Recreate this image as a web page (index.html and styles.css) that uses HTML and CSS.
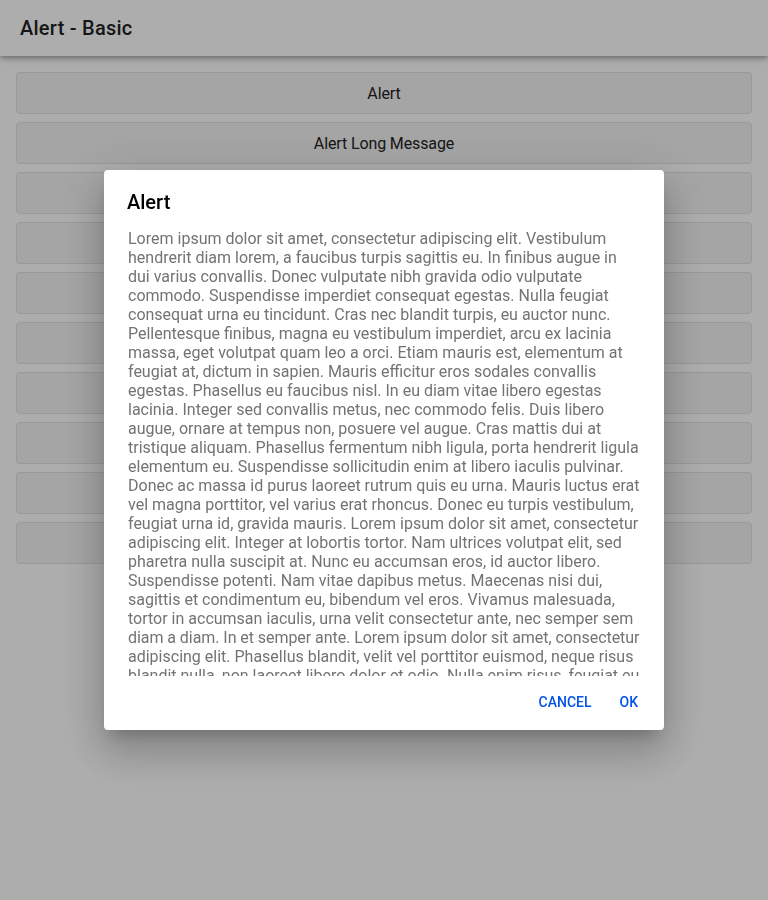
FILE: index.html
```html
<!DOCTYPE html>
<html lang="en">
<head>
<meta charset="utf-8">
<title>Alert - Basic</title>
<link rel="stylesheet" href="styles.css">
</head>
<body>
<div class="app">
  <header class="toolbar">
    <div class="toolbar-title">Alert - Basic</div>
  </header>
  <main class="content">
    <button class="demo-btn">Alert</button>
    <button class="demo-btn">Alert Long Message</button>
    <button class="demo-btn">Multiple Buttons (&gt;2)</button>
    <button class="demo-btn">Alert No Message</button>
    <button class="demo-btn">Confirm</button>
    <button class="demo-btn">Prompt</button>
    <button class="demo-btn">Radio</button>
    <button class="demo-btn">Checkbox</button>
    <button class="demo-btn">CSS Class</button>
    <button class="demo-btn">Alert with Translucent</button>
  </main>
</div>
<div class="backdrop"></div>
<div class="alert-host">
  <div class="alert-wrapper" role="alertdialog">
    <div class="alert-head">
      <h2 class="alert-title">Alert</h2>
    </div>
    <div class="alert-message">Lorem ipsum dolor sit amet, consectetur adipiscing elit. Vestibulum hendrerit diam lorem, a faucibus turpis sagittis eu. In finibus augue in dui varius convallis. Donec vulputate nibh gravida odio vulputate commodo. Suspendisse imperdiet consequat egestas. Nulla feugiat consequat urna eu tincidunt. Cras nec blandit turpis, eu auctor nunc. Pellentesque finibus, magna eu vestibulum imperdiet, arcu ex lacinia massa, eget volutpat quam leo a orci. Etiam mauris est, elementum at feugiat at, dictum in sapien. Mauris efficitur eros sodales convallis egestas. Phasellus eu faucibus nisl. In eu diam vitae libero egestas lacinia. Integer sed convallis metus, nec commodo felis. Duis libero augue, ornare at tempus non, posuere vel augue. Cras mattis dui at tristique aliquam. Phasellus fermentum nibh ligula, porta hendrerit ligula elementum eu. Suspendisse sollicitudin enim at libero iaculis pulvinar. Donec ac massa id purus laoreet rutrum quis eu urna. Mauris luctus erat vel magna porttitor, vel varius erat rhoncus. Donec eu turpis vestibulum, feugiat urna id, gravida mauris. Lorem ipsum dolor sit amet, consectetur adipiscing elit. Integer at lobortis tortor. Nam ultrices volutpat elit, sed pharetra nulla suscipit at. Nunc eu accumsan eros, id auctor libero. Suspendisse potenti. Nam vitae dapibus metus. Maecenas nisi dui, sagittis et condimentum eu, bibendum vel eros. Vivamus malesuada, tortor in accumsan iaculis, urna velit consectetur ante, nec semper sem <span class="fit">diam a diam. In et semper ante. Lorem ipsum dolor sit amet, consectetur</span> adipiscing elit. Phasellus blandit, velit vel porttitor euismod, neque risus blandit nulla, non laoreet libero dolor et odio. Nulla enim risus, feugiat eu urna sit amet, aliquam fermentum nunc. Sed et dictum lectus, eu dignissim nibh. Curabitur at tellus vel magna posuere sollicitudin.</div>
    <div class="alert-button-group">
      <button class="alert-button">Cancel</button>
      <button class="alert-button">OK</button>
    </div>
  </div>
</div>
</body>
</html>
```

FILE: styles.css
```css
* { box-sizing: border-box; }

html, body {
  margin: 0;
  padding: 0;
  height: 100%;
}

body {
  font-family: Roboto, "Noto Sans", "Liberation Sans", sans-serif;
  background: #ffffff;
  overflow: hidden;
}

.app {
  display: flex;
  flex-direction: column;
  height: 100%;
}

.toolbar {
  height: 56px;
  flex: 0 0 56px;
  display: flex;
  align-items: center;
  padding: 0 20px;
  background: #ffffff;
  box-shadow: 0 2px 4px -1px rgba(0,0,0,0.2), 0 4px 5px 0 rgba(0,0,0,0.14), 0 1px 10px 0 rgba(0,0,0,0.12);
  position: relative;
  z-index: 1;
}

.toolbar-title {
  font-size: 20px;
  font-weight: 500;
  letter-spacing: 0.0125em;
  color: #1f1f1f;
}

.content {
  display: flex;
  flex-direction: column;
  gap: 8px;
  padding: 16px;
}

.demo-btn {
  height: 42px;
  width: 100%;
  border: 1px solid #e2e2e2;
  border-radius: 4px;
  background: #f4f4f4;
  font-family: Roboto, "Noto Sans", "Liberation Sans", sans-serif;
  font-size: 16px;
  letter-spacing: -0.12px;
  color: #222222;
  padding: 0;
}

.backdrop {
  position: fixed;
  inset: 0;
  z-index: 10;
  background: rgba(0,0,0,0.32);
}

.alert-host {
  position: fixed;
  inset: 0;
  z-index: 11;
  display: flex;
  align-items: center;
  justify-content: center;
}

.alert-wrapper {
  width: 560px;
  height: 560px;
  background: #ffffff;
  border-radius: 4px;
  display: flex;
  flex-direction: column;
  box-shadow: 0 11px 15px -7px rgba(0,0,0,0.2), 0 24px 38px 3px rgba(0,0,0,0.14), 0 9px 46px 8px rgba(0,0,0,0.12);
  overflow: hidden;
}

.alert-head {
  padding: 20px 23px 15px;
}

.alert-title {
  margin: 0;
  font-size: 20px;
  font-weight: 500;
  line-height: 24px;
  color: #000000;
}

.alert-message {
  flex: 1 1 auto;
  min-height: 0;
  overflow: hidden;
  padding: 0 24px;
  font-size: 16px;
  line-height: 19px;
  color: #737373;
}

.fit {
  letter-spacing: -0.06px;
}

.alert-button-group {
  display: flex;
  justify-content: flex-end;
  padding: 8px 8px 10px 24px;
  flex: 0 0 auto;
}

.alert-button {
  height: 36px;
  margin: 0 8px 0 0;
  padding: 0 10px;
  border: 0;
  border-radius: 2px;
  background: transparent;
  font-family: Roboto, "Noto Sans", "Liberation Sans", sans-serif;
  font-size: 14px;
  font-weight: 500;
  letter-spacing: 0;
  text-transform: uppercase;
  color: #0054e9;
}
```
